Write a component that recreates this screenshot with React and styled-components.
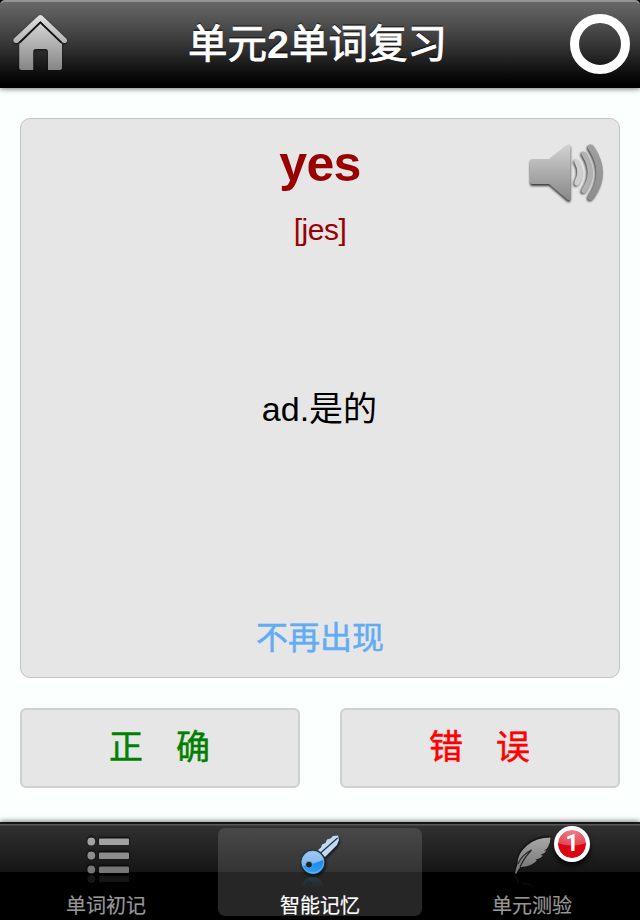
import React from 'react';
import styled, { createGlobalStyle } from 'styled-components'


const GlobalStyle = createGlobalStyle`
  * {
    box-sizing: border-box;
  }
  body {
    margin: 0;
    background: #fbfffe;
    font-family: "Liberation Sans", "Noto Sans CJK SC", sans-serif;
  }
`;

const Screen = styled.div`
  width: 640px;
  height: 920px;
  display: flex;
  flex-direction: column;
  overflow: hidden;
  background: #fbfffe;
`;

const Corners = styled.div`
  background: #000;
  height: 88px;
  flex: none;
  box-shadow: 0 1px 5px rgba(0,0,0,0.55);
`;

const Header = styled.header`
  height: 88px;
  display: flex;
  align-items: center;
  justify-content: space-between;
  padding: 0 10px 2px 12px;
  border-top: 2px solid #949494;
  border-radius: 5px 5px 0 0;
  background: linear-gradient(#686868, #383838 48%, #0a0a0a 86%, #000 97%);
`;

const Title = styled.h1`
  margin: 0;
  padding-right: 3px;
  font-size: 39.5px;
  line-height: 60px;
  font-weight: 400;
  white-space: nowrap;
  color: #fff;
  -webkit-text-stroke: 0.8px #fff;
  text-shadow: 0 -2px 0 rgba(0,0,0,0.5);

  b {
    font-weight: 700;
    -webkit-text-stroke: 0;
  }
`;

const Ring = styled.div`
  width: 60px;
  height: 60px;
  border: 9px solid #fff;
  border-radius: 50%;
`;

const Main = styled.main`
  flex: 1;
  display: flex;
  flex-direction: column;
  gap: 30px;
  padding: 30px 20px 0;
`;

const WordCard = styled.section`
  position: relative;
  height: 560px;
  display: flex;
  flex-direction: column;
  align-items: center;
  border: 1px solid #c3c5c4;
  border-radius: 10px;
  background: #e6e6e6;
`;

const SpeakerButton = styled.div`
  position: absolute;
  top: 20px;
  right: 10px;
  width: 84px;
  height: 70px;
`;

const Word = styled.div`
  margin-top: 15px;
  font-size: 50px;
  line-height: 60px;
  letter-spacing: -0.6px;
  font-weight: 700;
  color: #990000;
`;

const Phonetic = styled.div`
  margin-top: 18px;
  font-size: 30px;
  line-height: 36px;
  letter-spacing: -0.5px;
  color: #990000;
`;

const Meaning = styled.div`
  margin-top: 136px;
  padding-right: 1px;
  font-size: 34px;
  line-height: 50px;
  color: #000;
`;

const Dismiss = styled.div`
  margin-top: 180px;
  font-size: 32px;
  line-height: 48px;
  color: #62abf5;
  -webkit-text-stroke: 0.5px #62abf5;
`;

const Answers = styled.div`
  display: flex;
  gap: 40px;
`;

const AnswerButton = styled.div`
  flex: 1;
  height: 80px;
  display: flex;
  justify-content: center;
  gap: 33px;
  padding-right: 1px;
  border: 2px solid #d0d0d0;
  border-radius: 6px;
  background: #e6e6e6;
  font-size: 34px;
  line-height: 74px;
  color: ${props => props.$color};
  -webkit-text-stroke: 0.5px ${props => props.$color};
`;

const TabBar = styled.nav`
  height: 98px;
  display: flex;
  justify-content: space-between;
  padding: 4px 5px;
  border-top: 2px solid #151515;
  background: linear-gradient(#575757 0, #575757 1px, #303030 2px, #151515 48px, #000 48px);
  box-shadow: 0 -1px 5px rgba(0,0,0,0.5);
`;

const Tab = styled.div`
  position: relative;
  width: 204px;
  height: 88px;
  display: flex;
  flex-direction: column;
  align-items: center;
  border-radius: 7px;
  background: ${props => props.$active ? 'linear-gradient(#484848, #343434 44px, #262626 44px)' : 'none'};
  color: ${props => props.$active ? '#fff' : '#979797'};
`;

const TabIcon = styled.div`
  height: 63px;
  width: 60px;
`;

const TabLabel = styled.div`
  font-size: 20px;
  line-height: 30px;
  padding-right: ${props => props.$shift || '0'};
  -webkit-text-stroke: 0.2px;
`;

const Badge = styled.div`
  position: absolute;
  top: -2px;
  left: 123px;
  width: 36px;
  height: 36px;
  border: 4px solid #fff;
  border-radius: 50%;
  background: radial-gradient(ellipse 26px 16px at 50% 0, #ee7f88 0, #e34a55 94%, #dc0612 100%) padding-box, #fff;
  box-shadow: 0 4px 5px rgba(0,0,0,0.75);
  color: #fff;
  font-family: Roboto, "Liberation Sans", sans-serif;
  font-size: 23px;
  line-height: 27px;
  font-weight: 700;
  text-align: center;
`;


const HomeIcon = () => (
  <svg width="56" height="60" viewBox="12 14 56 60">
    <defs>
      <linearGradient id="home" x1="0" y1="15" x2="0" y2="70" gradientUnits="userSpaceOnUse">
        <stop offset="0" stopColor="#e2e2e2" />
        <stop offset="1" stopColor="#858585" />
      </linearGradient>
    </defs>
    <g fill="url(#home)" style={{ filter: 'drop-shadow(0 1px 1px #111)' }}>
      <path d="M38.7 15.6Q40.4 14.2 42.1 15.6L66.4 38.7Q68 41 66.2 42.4Q64.6 43.8 62.6 42.4L40.4 21.2L18.2 42.4Q16.2 43.8 14.4 42.4Q12.6 41 13.8 38.7Z" />
      <path d="M40.4 23.6L62 44V67.5Q62 70 59.5 70H48V52Q48 49 45.3 49H36Q33.2 49 33.2 52V70H21.7Q19.2 70 19.2 67.5V44Z" />
      <path d="M20 42.400L40.4 22.400L61 42.400" fill="none" stroke="#161616" strokeWidth="1.500" />
    </g>
  </svg>
);

const SpeakerIcon = () => (
  <svg width="84" height="70" viewBox="525 139 84 70">
    <defs>
      <linearGradient id="cone" x1="0" y1="144" x2="0" y2="202" gradientUnits="userSpaceOnUse">
        <stop offset="0" stopColor="#d3d3d3" />
        <stop offset="1" stopColor="#858585" />
      </linearGradient>
      <linearGradient id="wave" x1="0" y1="144" x2="0" y2="202" gradientUnits="userSpaceOnUse">
        <stop offset="0" stopColor="#a0a0a0" />
        <stop offset="1" stopColor="#8d8d8d" />
      </linearGradient>
    </defs>
    <g style={{ filter: 'drop-shadow(0 2px 1px rgba(0,0,0,0.75))' }}>
      <path d="M532 159H549L567 145Q570.5 143 570.5 146V198Q570.5 201.500 567 199.500L549 184H532Q530 184 530 182V161Q530 159 532 159Z" fill="url(#cone)" />
    </g>
    <g style={{ filter: 'drop-shadow(-1px 1px 1px rgba(0,0,0,0.75))' }}>
      <path d="M575 159.500Q578 158.500 580 162.500Q585.500 173 580 183Q577.500 187 575 185Q573.500 183.500 575 180.500Q579.500 172 575 164Q573.500 161 575 159.500Z" fill="#cfcfcf" />
      <path d="M582 152Q585 150.500 587 154Q599 173 587 191Q584.500 194.500 582 192.500Q580.500 191 582.500 188Q592.500 173 582.500 156.500Q580.500 153.500 582 152Z" fill="#b2b2b2" />
      <path d="M588.500 145.500Q591.500 143 594.500 147Q611.500 173 594.500 197.500Q591.500 202 588.500 199.500Q587 197.500 589 194.500Q603.500 173 589 150.500Q587 147.500 588.500 145.500Z" fill="url(#wave)" />
    </g>
  </svg>
);

const ListIcon = () => (
  <svg width="60" height="62" viewBox="77 828 60 62">
    <g style={{ filter: 'drop-shadow(0 -1px 1px #000)' }}>
      {[['#a3a3a3', 841.5], ['#8d8d8d', 855.5], ['#777', 869.5]].map(([color, y]) => (
        <g key={y} fill={color}>
          <circle cx="91.3" cy={y} r="3.900" />
          <rect x="99" y={y - 3} width="30" height="6.500" rx="1" />
        </g>
      ))}
    </g>
    <g fill="#151515">
      <circle cx="91.3" cy="879" r="3.900" />
      <rect x="99" y="876" width="30" height="6" rx="1" />
    </g>
  </svg>
);

const KeyIcon = () => (
  <svg width="60" height="62" viewBox="290 828 60 62">
    <defs>
      <linearGradient id="bow" x1="0" y1="851" x2="0" y2="873" gradientUnits="userSpaceOnUse">
        <stop offset="0" stopColor="#a4c7f2" />
        <stop offset="1" stopColor="#6daaf0" />
      </linearGradient>
      <linearGradient id="bowLow" x1="0" y1="860" x2="0" y2="873" gradientUnits="userSpaceOnUse">
        <stop offset="0" stopColor="#1f85e6" />
        <stop offset="1" stopColor="#2f9ff5" />
      </linearGradient>
      <linearGradient id="glow" x1="0" y1="875" x2="0" y2="888" gradientUnits="userSpaceOnUse">
        <stop offset="0" stopColor="#24404c" />
        <stop offset="1" stopColor="#262626" />
      </linearGradient>
    </defs>
    <path d="M301.500 888A11.300 12.500 0 0 1 324 888Z" fill="url(#glow)" />
    <circle cx="309" cy="883.500" r="3" fill="#202c32" />
    <g style={{ filter: 'drop-shadow(1px 2px 1px rgba(0,0,0,0.6))' }}>
      <path d="M318 850L321 847.500L322 844.500L325.500 843L327 839.500L330.500 838.500L333 836L338 835.500L339 840L337 845L325 857Z" fill="#bfdbf8" />
      <path d="M320 853.500L337.500 838" stroke="#303030" strokeWidth="1.300" />
      <circle cx="312.800" cy="862" r="12.500" fill="#303030" />
      <circle cx="312.800" cy="862" r="11" fill="url(#bow)" />
      <path d="M302.500 866Q313 864.500 323.700 859.800A11 11 0 0 1 302.500 866Z" fill="url(#bowLow)" />
      <circle cx="312.800" cy="862" r="10.900" fill="none" stroke="#65c5fa" strokeWidth="0.800" />
      <circle cx="309" cy="864.700" r="3.400" fill="#202020" stroke="#58c4ee" strokeWidth="0.800" />
    </g>
  </svg>
);

const FeatherIcon = () => (
  <svg width="60" height="62" viewBox="503 828 60 62">
    <defs>
      <linearGradient id="feather" x1="0" y1="837" x2="0" y2="873" gradientUnits="userSpaceOnUse">
        <stop offset="0" stopColor="#a9a9a9" />
        <stop offset="1" stopColor="#717171" />
      </linearGradient>
    </defs>
    <g style={{ filter: 'drop-shadow(0 -1px 1px #000)' }}>
      <path d="M550.500 837.500Q536 837.500 527 845.500Q517 854 517.500 864Q515.500 869 515 873.500H516.500Q517.500 870 520.500 867Q530 867.500 537 860.500L535.500 859.500Q540 859 543 855.500L540.500 855Q544.500 854 546.500 850.500L544 850.500Q547.500 849 548.500 846Q550.500 842 550.500 837.500Z" fill="url(#feather)" />
      <path d="M518 864Q522 854.500 531.500 850Q524 858 520 867" fill="none" stroke="#252525" strokeWidth="1.200" />
    </g>
    <path d="M515.500 876Q517 880 519 883M522 884Q528 882 533 887" fill="none" stroke="#0c0c0c" strokeWidth="1.500" />
  </svg>
);


const App = () => {
  return (
  <Screen>
    <GlobalStyle />
    <Corners>
      <Header>
        <HomeIcon />
        <Title>单元<b>2</b>单词复习</Title>
        <Ring />
      </Header>
    </Corners>
    <Main>
      <WordCard>
        <Word>yes</Word>
        <Phonetic>[jes]</Phonetic>
        <Meaning>ad.是的</Meaning>
        <Dismiss>不再出现</Dismiss>
        <SpeakerButton><SpeakerIcon /></SpeakerButton>
      </WordCard>
      <Answers>
        <AnswerButton $color="#008000"><span>正</span><span>确</span></AnswerButton>
        <AnswerButton $color="#ff0000"><span>错</span><span>误</span></AnswerButton>
      </Answers>
    </Main>
    <TabBar>
      <Tab>
        <TabIcon><ListIcon /></TabIcon>
        <TabLabel $shift="2px">单词初记</TabLabel>
      </Tab>
      <Tab $active>
        <TabIcon><KeyIcon /></TabIcon>
        <TabLabel>智能记忆</TabLabel>
      </Tab>
      <Tab>
        <TabIcon><FeatherIcon /></TabIcon>
        <TabLabel $shift="2px">单元测验</TabLabel>
        <Badge>1</Badge>
      </Tab>
    </TabBar>
  </Screen>
  );
};

export default App;
